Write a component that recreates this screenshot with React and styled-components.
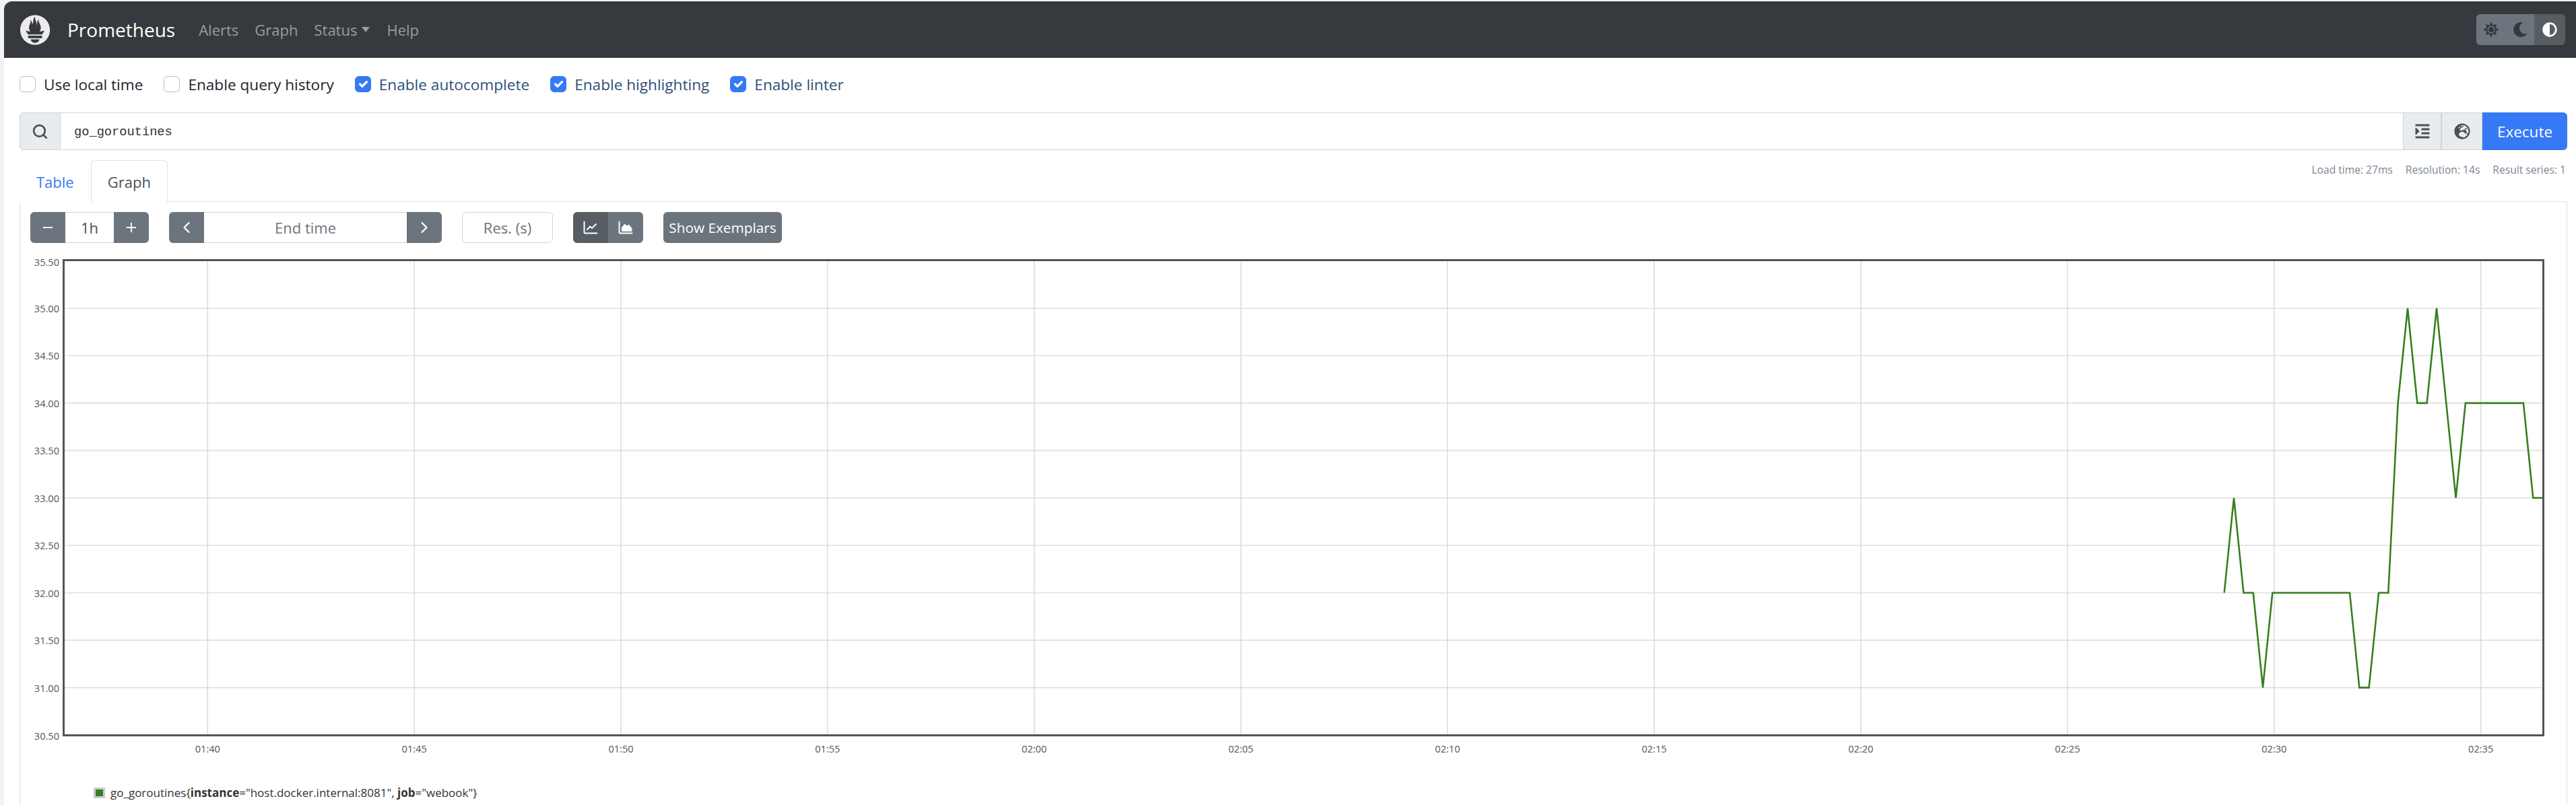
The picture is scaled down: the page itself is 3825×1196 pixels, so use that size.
import React from "react";
import styled, { createGlobalStyle } from "styled-components";
import { FaIndent, FaGlobeEurope, FaSun, FaMoon, FaAdjust } from "react-icons/fa";
import { Search, Minus, Plus, ChevronLeft, ChevronRight } from "lucide-react";

const UI_FONT = `"Open Sans", "Noto Sans", sans-serif`;

const GlobalStyle = createGlobalStyle`
  html, body {
    margin: 0;
    height: 1196px;
    overflow: hidden;
    background: #f3f3f3;
  }
  body {
    padding: 2px 0 0 6px;
    box-sizing: border-box;
    font-family: ${UI_FONT};
  }
`;

const Shell = styled.div`
  height: 1194px;
  background: #ffffff;
  border-top-left-radius: 12px;
  overflow: hidden;
  display: flex;
  flex-direction: column;
`;

const Navbar = styled.nav`
  height: 84px;
  flex: none;
  display: flex;
  align-items: center;
  background: #363a3f;
  padding: 0 16px 0 24px;
`;

const Logo = styled.svg`
  width: 45px;
  height: 45px;
  margin-right: 25px;
  fill: #ececec;
`;

const Brand = styled.span`
  font-size: 28px;
  color: #ffffff;
  margin-right: 35px;
`;

const NavLink = styled.span`
  font-size: 22px;
  color: #9a9c9f;
  margin-right: 24px;
  display: flex;
  align-items: center;
`;

const Caret = styled.i`
  width: 0;
  height: 0;
  margin-left: 7px;
  margin-right: 1px;
  border-top: 8px solid #9a9c9f;
  border-left: 6.5px solid transparent;
  border-right: 6.5px solid transparent;
`;

const ThemeGroup = styled.div`
  margin-left: auto;
  display: flex;
  height: 46px;
  border-radius: 6px;
  overflow: hidden;
`;

const ThemeButton = styled.div`
  width: ${(p) => (p.$active ? 46 : 43)}px;
  display: flex;
  align-items: center;
  justify-content: center;
  font-size: 22px;
  background: ${(p) => (p.$active ? "#565e64" : "#6c757d")};
  color: ${(p) => (p.$active ? "#ffffff" : "#343a40")};
`;

const Content = styled.main`
  flex: 1;
  min-height: 0;
  display: flex;
  flex-direction: column;
  padding: 27px 13px 0 23px;
`;

const Options = styled.div`
  display: flex;
  gap: 31px;
  height: 24px;
  margin-bottom: 30px;
`;

const Option = styled.label`
  display: flex;
  align-items: center;
  gap: 12px;
  font-size: 22.6px;
  color: ${(p) => (p.$checked ? "#2f4f78" : "#212529")};
`;

const Box = styled.span`
  width: 24px;
  height: 24px;
  box-sizing: border-box;
  border-radius: 6px;
  border: 1px solid ${(p) => (p.$checked ? "#3679f5" : "#b9bdc2")};
  background: ${(p) => (p.$checked ? "#3679f5" : "#ffffff")};
  display: flex;
`;

const QueryRow = styled.div`
  display: flex;
  height: 56px;
  flex: none;
`;

const Addon = styled.div`
  width: ${(p) => p.$w}px;
  flex: none;
  box-sizing: border-box;
  display: flex;
  align-items: center;
  justify-content: center;
  font-size: 24px;
  color: #495057;
  background: #e9ecef;
  border: 1px solid #ced4da;
  border-radius: ${(p) => (p.$first ? "6px 0 0 6px" : "0")};
`;

const QueryInput = styled.div`
  flex: 1;
  display: flex;
  align-items: center;
  padding: 2px 0 0 20px;
  border-top: 1px solid #ced4da;
  border-bottom: 1px solid #ced4da;
  font-family: "Liberation Mono", monospace;
  font-size: 18.7px;
  color: #333333;
`;

const ExecuteButton = styled.div`
  width: 126px;
  flex: none;
  display: flex;
  align-items: center;
  justify-content: center;
  background: #3679f5;
  color: #ffffff;
  font-size: 22.5px;
  border-radius: 0 6px 6px 0;
`;

const TabRow = styled.div`
  display: flex;
  justify-content: space-between;
  margin-top: 15px;
  height: 61px;
  flex: none;
`;

const Tabs = styled.div`
  display: flex;
`;

const Tab = styled.div`
  height: 62px;
  box-sizing: border-box;
  padding: 0 24px;
  display: flex;
  align-items: center;
  font-size: 22px;
  color: ${(p) => (p.$active ? "#495057" : "#3679f5")};
  background: #ffffff;
  position: relative;
  border: 1px solid ${(p) => (p.$active ? "#dee2e6" : "transparent")};
  border-bottom: none;
  border-radius: 6px 6px 0 0;
`;

const Stats = styled.div`
  display: flex;
  gap: 19px;
  padding: 3px 2px 0 0;
  font-size: 15.6px;
  line-height: 22px;
  color: #7b8794;
`;

const Panel = styled.section`
  flex: 1;
  min-height: 0;
  border: 1px solid #dee2e6;
  border-bottom: none;
`;

const Toolbar = styled.div`
  display: flex;
  height: 46px;
  gap: 30px;
  margin: 15px 0 14px 15px;
`;

const Group = styled.div`
  display: flex;
  border-radius: 6px;
  overflow: hidden;
`;

const GrayButton = styled.div`
  width: 52px;
  display: flex;
  align-items: center;
  justify-content: center;
  color: #ffffff;
  background: ${(p) => (p.$active ? "#565e64" : "#6c757d")};
`;

const ToolInput = styled.div`
  width: ${(p) => p.$w}px;
  box-sizing: border-box;
  display: flex;
  align-items: center;
  justify-content: center;
  font-size: 22px;
  color: ${(p) => p.$color || "#6c757d"};
  border: 1px solid #ced4da;
  border-width: 1px 0;
  background: #ffffff;
`;

const ResInput = styled(ToolInput)`
  border-width: 1px;
  border-radius: 6px;
`;

const TextButton = styled.div`
  width: 176px;
  display: flex;
  align-items: center;
  justify-content: center;
  font-size: 20.8px;
  color: #ffffff;
  background: #6c757d;
  border-radius: 6px;
`;

const ChartSvg = styled.svg`
  display: block;
  text {
    font-family: ${UI_FONT};
    font-size: 14.6px;
    fill: #545454;
  }
`;

const Legend = styled.div`
  display: flex;
  align-items: center;
  gap: 8px;
  margin: 35px 0 0 109px;
  font-size: 17px;
  line-height: 16px;
  color: #333333;
`;

const Swatch = styled.span`
  width: 17px;
  height: 16px;
  flex: none;
  box-sizing: border-box;
  border: 3px solid #cccccc;
  background: #377f1f;
`;

const LOGO_PATH =
  "M56.667.667C25.372.667 0 26.036 0 57.332c0 31.295 25.372 56.666 56.667 56.666s56.666-25.371 56.666-56.666C113.333 26.036 87.961.667 56.667.667zm0 106.055c-8.904 0-16.123-5.948-16.123-13.283H72.79c0 7.334-7.219 13.283-16.123 13.283zM83.297 89.04H30.034v-9.658h53.264v9.658zm-.191-14.629H30.186c-.176-.203-.356-.403-.526-.609-5.452-6.62-6.736-10.076-7.983-13.598-.021-.116 6.611 1.355 11.314 2.413 0 0 2.42.56 5.958 1.205-3.397-3.982-5.414-9.044-5.414-14.218 0-11.359 8.712-21.285 5.569-29.308 3.059.249 6.331 6.456 6.552 16.161 3.252-4.494 4.613-12.701 4.613-17.733 0-5.21 3.433-11.262 6.867-11.469-3.061 5.045.793 9.37 4.219 20.099 1.285 4.03 1.121 10.812 2.113 15.113.329-8.933 1.865-21.967 7.533-26.467-2.5 5.667.37 12.758 2.333 16.167 3.167 5.5 5.087 9.667 5.087 17.548 0 5.284-1.951 10.259-5.242 14.148 3.742-.702 6.326-1.335 6.326-1.335l12.152-2.371c.001-.001-1.765 7.261-8.55 14.254z";

const options = [
  { label: "Use local time" },
  { label: "Enable query history" },
  { label: "Enable autocomplete", checked: true },
  { label: "Enable highlighting", checked: true },
  { label: "Enable linter", checked: true },
];

const yTicks = ["35.00", "34.50", "34.00", "33.50", "33.00", "32.50", "32.00", "31.50", "31.00"];
const xTicks = ["01:40", "01:45", "01:50", "01:55", "02:00", "02:05", "02:10", "02:15", "02:20", "02:25", "02:30", "02:35"];

const tickY = (i) => 458 + i * 70.45;
const tickX = (i) => 308.3 + i * 306.85;

// one sample every 14s, value per step
const series = [
  32, 33, 32, 32, 31, 32, 32, 32, 32, 32, 32, 32, 32, 32, 31, 31, 32, 32, 34, 35, 34, 34, 35, 34, 33, 34, 34, 34, 34, 34,
  34, 34, 33, 33,
];
const seriesPath = series
  .map((v, i) => `${(3302.7 + i * 14.33).toFixed(1)},${(458 + (35 - v) * 140.9).toFixed(1)}`)
  .join(" ");

const Chart = () => (
  <ChartSvg width="3781" height="760" viewBox="30 375 3781 760">
    {yTicks.map((t, i) => (
      <line key={t} x1="95" x2="3776" y1={tickY(i)} y2={tickY(i)} stroke="#dfdfdf" strokeWidth="1.6" />
    ))}
    {xTicks.map((t, i) => (
      <line key={t} x1={tickX(i)} x2={tickX(i)} y1="387" y2="1092" stroke="#d8d8d8" strokeWidth="1.4" />
    ))}
    <polyline points={seriesPath} fill="none" stroke="#377f1f" strokeWidth="2.6" strokeLinejoin="miter" />
    <rect x="94.5" y="386.5" width="3682" height="706" fill="none" stroke="#545454" strokeWidth="3" />
    <text x="88" y="389" textAnchor="end" dominantBaseline="central">
      35.50
    </text>
    {yTicks.map((t, i) => (
      <text key={t} x="88" y={tickY(i)} textAnchor="end" dominantBaseline="central">
        {t}
      </text>
    ))}
    <text x="88" y="1092.5" textAnchor="end" dominantBaseline="central">
      30.50
    </text>
    {xTicks.map((t, i) => (
      <text key={t} x={tickX(i)} y="1111.5" textAnchor="middle" dominantBaseline="central">
        {t}
      </text>
    ))}
  </ChartSvg>
);

const LineIcon = () => (
  <svg viewBox="0 0 22 20" width="22" height="20" fill="none" stroke="#fff" strokeWidth="2" strokeLinecap="round" strokeLinejoin="round">
    <path d="M1.5 1.5v15.5a1.5 1.5 0 0 0 1.5 1.5h17.5" />
    <path d="M6 13l4-4.5l3 2.5l6-6" />
  </svg>
);

const AreaIcon = () => (
  <svg viewBox="0 0 22 20" width="22" height="20" fill="none" stroke="#fff" strokeWidth="2" strokeLinecap="round" strokeLinejoin="round">
    <path d="M1.5 1.5v15.5a1.5 1.5 0 0 0 1.5 1.5h17.5" />
    <path d="M5.5 15V10l4-5l3.5 3l2.5-2l4.5 5v4z" fill="#fff" strokeWidth="1" />
  </svg>
);

export default function App() {
  return (
    <Shell>
      <GlobalStyle />
      <Navbar>
        <Logo viewBox="0 0 115.333 114.667">
          <path d={LOGO_PATH} />
        </Logo>
        <Brand>Prometheus</Brand>
        <NavLink>Alerts</NavLink>
        <NavLink>Graph</NavLink>
        <NavLink>
          Status
          <Caret />
        </NavLink>
        <NavLink>Help</NavLink>
        <ThemeGroup>
          <ThemeButton>
            <FaSun />
          </ThemeButton>
          <ThemeButton>
            <FaMoon />
          </ThemeButton>
          <ThemeButton $active>
            <FaAdjust />
          </ThemeButton>
        </ThemeGroup>
      </Navbar>
      <Content>
        <Options>
          {options.map((o) => (
            <Option key={o.label} $checked={o.checked}>
              <Box $checked={o.checked}>
                {o.checked && (
                  <svg viewBox="0 0 20 20" width="22" height="22">
                    <path d="M6 10l3 3l6-6" fill="none" stroke="#fff" strokeWidth="3" strokeLinecap="round" strokeLinejoin="round" />
                  </svg>
                )}
              </Box>
              {o.label}
            </Option>
          ))}
        </Options>
        <QueryRow>
          <Addon $w={61} $first>
            <Search size={25} strokeWidth={2.6} />
          </Addon>
          <QueryInput>go_goroutines</QueryInput>
          <Addon $w={57}>
            <FaIndent />
          </Addon>
          <Addon $w={61}>
            <FaGlobeEurope />
          </Addon>
          <ExecuteButton>Execute</ExecuteButton>
        </QueryRow>
        <TabRow>
          <Tabs>
            <Tab>Table</Tab>
            <Tab $active>Graph</Tab>
          </Tabs>
          <Stats>
            <span>Load time: 27ms</span>
            <span>Resolution: 14s</span>
            <span>Result series: 1</span>
          </Stats>
        </TabRow>
        <Panel>
          <Toolbar>
            <Group>
              <GrayButton>
                <Minus size={22} strokeWidth={2} />
              </GrayButton>
              <ToolInput $w={72} $color="#495057">
                1h
              </ToolInput>
              <GrayButton>
                <Plus size={22} strokeWidth={2} />
              </GrayButton>
            </Group>
            <Group>
              <GrayButton>
                <ChevronLeft size={28} strokeWidth={2} />
              </GrayButton>
              <ToolInput $w={301}>End time</ToolInput>
              <GrayButton>
                <ChevronRight size={28} strokeWidth={2} />
              </GrayButton>
            </Group>
            <ResInput $w={135}>Res. (s)</ResInput>
            <Group>
              <GrayButton $active>
                <LineIcon />
              </GrayButton>
              <GrayButton>
                <AreaIcon />
              </GrayButton>
            </Group>
            <TextButton>Show Exemplars</TextButton>
          </Toolbar>
          <Chart />
          <Legend>
            <Swatch />
            <span>
              go_goroutines{"{"}
              <b>instance</b>="host.docker.internal:8081", <b>job</b>="webook"{"}"}
            </span>
          </Legend>
        </Panel>
      </Content>
    </Shell>
  );
}
